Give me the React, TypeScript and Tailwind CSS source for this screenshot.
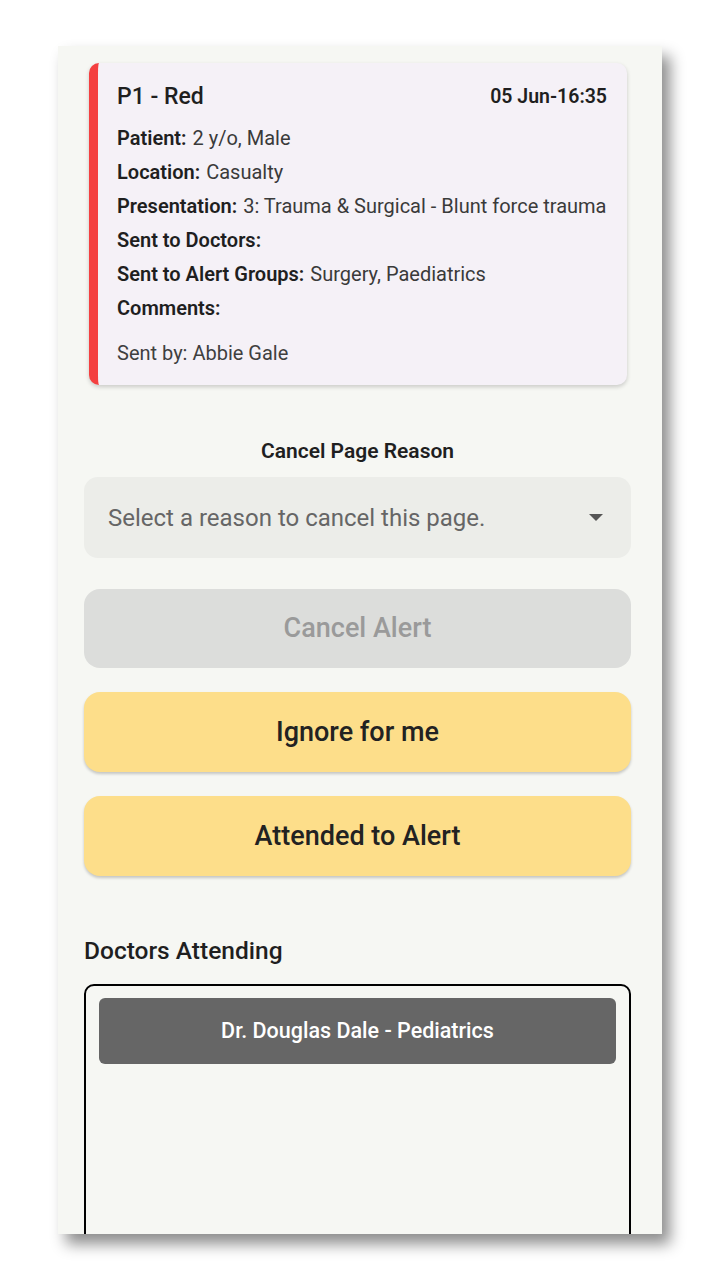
import React from "react";

const rows: { label: string; value: string }[] = [
  { label: "Patient:", value: "2 y/o, Male" },
  { label: "Location:", value: "Casualty" },
  { label: "Presentation:", value: "3: Trauma & Surgical - Blunt force trauma" },
  { label: "Sent to Doctors:", value: "" },
  { label: "Sent to Alert Groups:", value: "Surgery, Paediatrics" },
  { label: "Comments:", value: "" },
];

export default function App() {
  return (
    <div className="w-[720px] h-[1280px] bg-white font-['Roboto',sans-serif] text-[#1f1f1f] pt-[46px] pl-[58px]">
      {/* Phone frame */}
      <div className="w-[604px] h-[1188px] overflow-hidden bg-[#f6f7f3] shadow-[8px_10px_14px_rgba(0,0,0,0.45)] pl-[26px] pr-[31px] pt-[17px]">
        {/* Alert card */}
        <div className="ml-[5px] mr-[4px] rounded-[10px] bg-[#f5f1f7] border-l-[9px] border-[#f44040] shadow-[0_2px_4px_rgba(0,0,0,0.18)] pl-[19px] pr-[20px] pt-[20px] pb-[15px]">
          <div className="flex items-center justify-between h-[28px]">
            <span className="text-[23px] font-medium">P1 - Red</span>
            <span className="text-[19.5px] font-semibold">05 Jun-16:35</span>
          </div>
          <div className="mt-[10px]">
            {rows.map((r) => (
              <div key={r.label} className="h-[34px] flex items-center text-[20px] text-[#3a3a3a] whitespace-nowrap">
                <span className="font-semibold text-[#1f1f1f]">{r.label}</span>
                {r.value && <span className="ml-[6px]">{r.value}</span>}
              </div>
            ))}
          </div>
          <div className="mt-[11px] h-[34px] flex items-center text-[20px] text-[#3f3f3f]">
            Sent by: Abbie Gale
          </div>
        </div>

        {/* Cancel reason */}
        <div className="mt-[52px] text-center text-[21px] font-semibold h-[28px] leading-[28px]">
          Cancel Page Reason
        </div>
        <div className="mt-[12px] h-[81px] rounded-[14px] bg-[#ecede9] flex items-center justify-between pl-[24px] pr-[28px]">
          <span className="text-[24px] text-[#666]">Select a reason to cancel this page.</span>
          <svg width="14" height="8" viewBox="0 0 14 8">
            <path d="M0 0 L14 0 L7 7 Z" fill="#555" />
          </svg>
        </div>

        {/* Buttons */}
        <div className="mt-[31px] flex flex-col gap-[24px]">
          <div className="h-[79px] rounded-[16px] bg-[#dcdddb] flex items-center justify-center text-[27px] font-medium text-[#9a9a9a]">
            Cancel Alert
          </div>
          <div className="h-[80px] rounded-[16px] bg-[#fdde8a] shadow-[0_2px_3px_rgba(0,0,0,0.2)] flex items-center justify-center text-[27px] font-medium text-[#222]">
            Ignore for me
          </div>
          <div className="h-[80px] rounded-[16px] bg-[#fdde8a] shadow-[0_2px_3px_rgba(0,0,0,0.2)] flex items-center justify-center text-[27px] font-medium text-[#222]">
            Attended to Alert
          </div>
        </div>

        {/* Doctors attending */}
        <div className="mt-[60px] text-[24.5px] font-medium h-[30px] leading-[30px]">Doctors Attending</div>
        <div className="mt-[18px] h-[320px] rounded-[10px] border-2 border-black px-[13px] pt-[12px]">
          <div className="h-[66px] rounded-[6px] bg-[#666666] flex items-center justify-center text-[21.5px] font-medium text-white">
            Dr. Douglas Dale - Pediatrics
          </div>
        </div>
      </div>
    </div>
  );
}
